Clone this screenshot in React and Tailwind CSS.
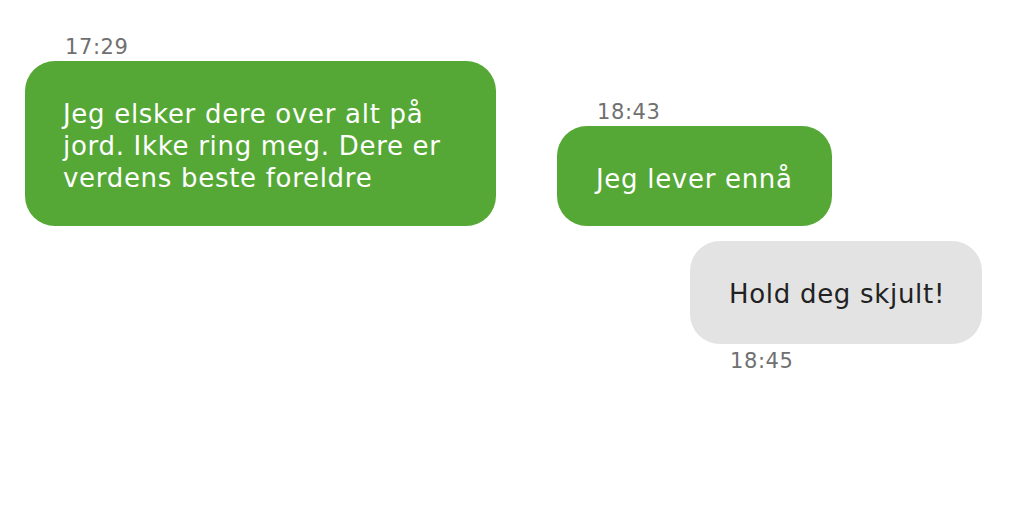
export default function App() {
  return (
    <div className="min-h-screen w-full bg-white font-['DejaVu_Sans',Verdana,sans-serif] pt-[35px]">
      <div className="flex items-end">
        <div className="ml-[25px] flex flex-col">
          <span className="ml-[40px] mb-[2px] text-[21px] leading-[24px] tracking-[0.6px] text-[#707070]">17:29</span>
          <div className="w-[471px] h-[165px] rounded-[30px] bg-[#55a835] pl-[38px] pr-[26px] pt-[37px] text-[26px] leading-[32px] tracking-[0.7px] text-white">
            Jeg elsker dere over alt på jord. Ikke ring meg. Dere er verdens beste foreldre
          </div>
        </div>
        <div className="ml-[61px] flex flex-col">
          <span className="ml-[40px] mb-[2px] text-[21px] leading-[24px] tracking-[0.6px] text-[#707070]">18:43</span>
          <div className="w-[275px] h-[100px] rounded-[30px] bg-[#55a835] pl-[39px] pt-[37px] text-[26px] leading-[32px] tracking-[0.7px] text-white whitespace-nowrap">
            Jeg lever ennå
          </div>
        </div>
      </div>
      <div className="mt-[15px] flex justify-end pr-[42px]">
        <div className="flex flex-col">
          <div className="w-[292px] h-[103px] rounded-[30px] bg-[#e3e3e3] pl-[39px] pt-[37px] text-[26px] leading-[32px] tracking-[0.7px] text-[#222222] whitespace-nowrap">
            Hold deg skjult!
          </div>
          <span className="ml-[40px] mt-[5px] text-[21px] leading-[24px] tracking-[0.6px] text-[#707070]">18:45</span>
        </div>
      </div>
    </div>
  );
}
